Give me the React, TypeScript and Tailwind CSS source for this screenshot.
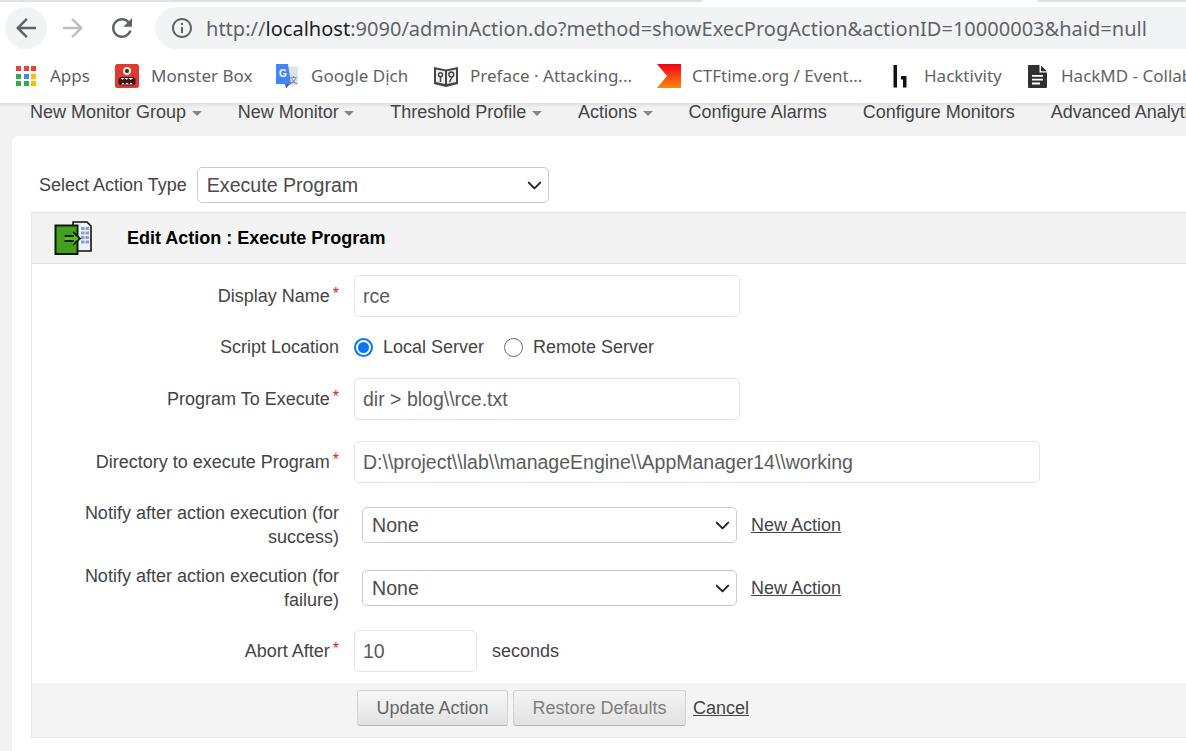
import { ChevronDown } from 'lucide-react';

const navItems = [
  { label: 'New Monitor Group', menu: true },
  { label: 'New Monitor', menu: true },
  { label: 'Threshold Profile', menu: true },
  { label: 'Actions', menu: true },
  { label: 'Configure Alarms', menu: false },
  { label: 'Configure Monitors', menu: false },
  { label: 'Advanced Analytics', menu: false },
];

function ToolbarIcon({ d, color, size }: { d: string; color: string; size: string }) {
  return (
    <svg viewBox="0 0 24 24" className={`shrink-0 ${size}`}>
      <path d={d} fill={color} />
    </svg>
  );
}

function AppsIcon() {
  const colors = ['#ea4335', '#ea4335', '#ea4335', '#34a853', '#4285f4', '#fbbc05', '#34a853', '#34a853', '#fbbc05'];
  return (
    <div className="grid grid-cols-3 gap-[2.5px] w-[20px] h-[20px] shrink-0">
      {colors.map((c, i) => (
        <svg key={i} viewBox="0 0 4 4" className="w-[5px] h-[5px]">
          <rect width="4" height="4" fill={c} />
        </svg>
      ))}
    </div>
  );
}

function MonsterIcon() {
  return (
    <svg viewBox="0 0 24 24" className="w-6 h-6 shrink-0">
      <rect width="24" height="24" rx="2.5" fill="#e0392f" />
      <circle cx="12" cy="7" r="4.2" fill="#e9e4e2" />
      <circle cx="12" cy="7" r="2" fill="#55201c" />
      <rect x="3.5" y="13" width="17" height="8.5" rx="3.5" fill="#3a1212" />
      <path d="M5.5 14 L7.5 16 L9.5 14 L11.5 16 L13.5 14 L15.5 16 L18.5 14 Z" fill="#f5ecea" />
      <path d="M6 20.5 L8 18.5 L10 20.5 L12 18.5 L14 20.5 L16 18.5 L18 20.5 Z" fill="#f5ecea" />
    </svg>
  );
}

function TranslateIcon() {
  return (
    <svg viewBox="0 0 24 26" className="w-6 h-[26px] shrink-0">
      <path d="M9 4 H23 V22 H9 Z" fill="#dfe3e8" />
      <path d="M1 1 H13 L16 21 H1 Z" fill="#4285f4" />
      <path d="M10 21 L15 21 L11 25.5 Z" fill="#3367c9" />
      <text x="4" y="13.5" fontSize="10" fontWeight="700" fill="#fff" fontFamily="Liberation Sans, sans-serif">G</text>
      <text x="14.5" y="20" fontSize="8" fill="#666" fontFamily="Noto Sans CJK SC, sans-serif">文</text>
    </svg>
  );
}

function BookIcon() {
  return (
    <svg viewBox="0 0 24 21" className="w-6 h-[21px] shrink-0">
      <path d="M0 1 L12 3.5 L24 1 V18 L12 21 L0 18 Z" fill="#444" />
      <path d="M2 3.5 L11 5.2 V18 L2 16 Z M13 5.2 L22 3.5 V16 L13 18 Z" fill="#efefef" />
      <circle cx="6.5" cy="8.7" r="2" fill="none" stroke="#444" strokeWidth="1.5" />
      <path d="M6.5 10.5 V16" stroke="#444" strokeWidth="1.5" />
      <circle cx="17.3" cy="8.5" r="2.4" fill="none" stroke="#444" strokeWidth="1.5" />
      <path d="M18 11 L15.5 16.3" stroke="#444" strokeWidth="1.5" />
    </svg>
  );
}

function CtfIcon() {
  return (
    <svg viewBox="0 0 24 24" className="w-6 h-6 shrink-0">
      <defs>
        <linearGradient id="ctf" x1="0" y1="0" x2="0" y2="1">
          <stop offset="0" stopColor="#f0001c" />
          <stop offset="1" stopColor="#ff8a00" />
        </linearGradient>
      </defs>
      <path d="M0 0 H24 V24 H0 L10 12 Z" fill="url(#ctf)" />
    </svg>
  );
}

function H1Icon() {
  return (
    <svg viewBox="0 0 14 23" className="w-[14px] h-[23px] shrink-0">
      <path d="M0.5 0 H4 V22.5 H0.5 Z M8 11 H13.5 V22.5 H10 V14.5 H8 Z" fill="#111" />
    </svg>
  );
}

function DocIcon() {
  return (
    <svg viewBox="0 0 19 23" className="w-[19px] h-[23px] shrink-0">
      <path d="M1 0 H11.5 V7.5 H19 V22 Q19 23 18 23 H1 Q0 23 0 22 V1 Q0 0 1 0 Z" fill="#303030" />
      <path d="M13 0.5 L19 6.2 H13 Z" fill="#303030" />
      <path d="M4 10 H15 V11.8 H4 Z M4 13.8 H15 V15.6 H4 Z M4 17.6 H12 V19.4 H4 Z" fill="#fff" />
    </svg>
  );
}

function ActionIcon() {
  return (
    <svg viewBox="0 0 38 34" className="w-[38px] h-[34px] shrink-0">
      <path d="M19 1 H33 L37 5 V30 H19 Z" fill="#eef1f8" stroke="#111" strokeWidth="1.6" />
      <g fill="#8f9ccc">
        <rect x="27" y="6" width="3.5" height="3" /><rect x="31.5" y="6" width="3.5" height="3" />
        <rect x="27" y="10.5" width="3.5" height="3" /><rect x="31.5" y="10.5" width="3.5" height="3" />
        <rect x="27" y="15" width="3.5" height="3" /><rect x="31.5" y="15" width="3.5" height="3" />
        <rect x="27" y="19.5" width="3.5" height="3" /><rect x="31.5" y="19.5" width="3.5" height="3" />
      </g>
      <path d="M1.5 4.5 H23.5 V33 H1.5 Z" fill="#44a01c" stroke="#071c03" strokeWidth="2" />
      <path d="M10.5 14 H18 V10.5 L26 17.5 L18 24.5 V21 H10.5 Z" fill="#5fb526" />
      <path d="M10.5 15 H20 M10.5 20 H20 M19 11 L26 17.5 L19 24" fill="none" stroke="#0c2606" strokeWidth="1.8" />
    </svg>
  );
}

function Bookmark({ icon, label, width, iconCol }: { icon: React.ReactNode; label: string; width: string; iconCol: string }) {
  return (
    <div className={`flex items-center shrink-0 ${width}`}>
      <div className={`flex items-center shrink-0 ${iconCol}`}>{icon}</div>
      <span className="whitespace-nowrap">{label}</span>
    </div>
  );
}

function Row({ label, required, className, children }: { label: string; required?: boolean; className: string; children: React.ReactNode }) {
  return (
    <div className={`flex items-center ${className}`}>
      <div className="w-[307px] shrink-0 text-right leading-6 pl-[40px]">
        {label}
        <span className={required ? 'text-[#e0202a] ml-[3px] align-text-top text-[16px] leading-4' : 'hidden'}>*</span>
      </div>
      <div className="flex items-center ml-[15px]">{children}</div>
    </div>
  );
}

function TextBox({ value, width }: { value: string; width: string }) {
  return (
    <div className={`h-[42px] border border-[#e3e3e3] rounded-[5px] bg-white flex items-center px-[8px] pt-[1px] text-[#5c5c5c] text-[19.5px] ${width}`}>
      {value}
    </div>
  );
}

function SelectBox({ value, width }: { value: string; width: string }) {
  return (
    <div className={`h-9 border border-[#cccccc] rounded-[5px] bg-white flex items-center justify-between pl-[9px] pr-[2px] pt-[1px] text-[#4a4a4a] text-[19.6px] ${width}`}>
      {value}
      <ChevronDown size={23} strokeWidth={2} color="#222" />
    </div>
  );
}

function NewAction() {
  return <span className="ml-[14px] pt-[1px] underline text-[#444]">New Action</span>;
}

export default function App() {
  return (
    <div className="w-[1186px] h-[751px] overflow-hidden bg-[#f2f2f2] text-[18px] text-[#444] font-['Liberation_Sans',sans-serif]">
      <div className="bg-white h-[103px] font-['Noto_Sans',sans-serif] text-[#5f6368]">
        <div className="flex h-[2px] bg-[#dee1e6]">
          <div className="ml-[702px] w-[335px] bg-white" />
        </div>
        <div className="flex items-start pt-[5px] h-[50px]">
          <div className="w-[42px] h-[42px] ml-[5px] rounded-full bg-[#f1f3f4] flex items-center justify-center shrink-0">
            <ToolbarIcon color="#5f6368" size="w-[30px] h-[30px]" d="M20 11H7.83l5.59-5.59L12 4l-8 8 8 8 1.41-1.41L7.83 13H20v-2z" />
          </div>
          <div className="h-[42px] flex items-center ml-[11px]">
            <ToolbarIcon color="#bdc1c6" size="w-[30px] h-[30px]" d="M12 4l-1.41 1.41L16.17 11H4v2h12.17l-5.58 5.59L12 20l8-8z" />
          </div>
          <div className="h-[42px] flex items-center ml-[19px]">
            <ToolbarIcon color="#5f6368" size="w-[30px] h-[30px]" d="M17.65 6.35C16.2 4.9 14.21 4 12 4c-4.42 0-7.99 3.58-7.99 8s3.57 8 7.99 8c3.73 0 6.84-2.55 7.73-6h-2.08c-.82 2.33-3.04 4-5.65 4-3.31 0-6-2.69-6-6s2.69-6 6-6c1.66 0 3.14.69 4.22 1.78L13 11h7V4l-2.35 2.35z" />
          </div>
          <div className="ml-[18px] flex-1 h-[42px] rounded-l-full bg-[#f1f3f4] flex items-center pl-[15px] text-[20px] tracking-[0.02px] whitespace-nowrap">
            <ToolbarIcon color="#5f6368" size="w-6 h-6" d="M11 7h2v2h-2zm0 4h2v6h-2zm1-9C6.48 2 2 6.48 2 12s4.48 10 10 10 10-4.48 10-10S17.52 2 12 2zm0 18c-4.41 0-8-3.59-8-8s3.59-8 8-8 8 3.59 8 8-3.59 8-8 8z" />
            <span className="ml-[12px] pt-[2px]">
              http://<span className="text-[#202124]">localhost</span>:9090/adminAction.do?method=showExecProgAction&amp;actionID=10000003&amp;haid=null
            </span>
          </div>
        </div>
        <div className="flex items-center h-[48px] pl-[16px] text-[17px] overflow-hidden">
          <Bookmark icon={<AppsIcon />} label="Apps" width="w-[99px]" iconCol="w-[34px]" />
          <Bookmark icon={<MonsterIcon />} label="Monster Box" width="w-[160px]" iconCol="w-[36px]" />
          <Bookmark icon={<TranslateIcon />} label="Google Dịch" width="w-[159px]" iconCol="w-[36px]" />
          <Bookmark icon={<BookIcon />} label="Preface · Attacking..." width="w-[223px]" iconCol="w-[36px]" />
          <Bookmark icon={<CtfIcon />} label="CTFtime.org / Event..." width="w-[236px]" iconCol="w-[35px]" />
          <Bookmark icon={<H1Icon />} label="Hacktivity" width="w-[135px]" iconCol="w-[31px]" />
          <Bookmark icon={<DocIcon />} label="HackMD - Collaborative" width="w-[200px]" iconCol="w-[33px]" />
        </div>
      </div>

      <nav className="flex items-center h-[33px] pb-[14px] pl-[30px] text-[#444] whitespace-nowrap bg-linear-to-b from-[#dedede] to-[#f2f2f2] to-[15%]">
        {navItems.map((item) => (
          <div key={item.label} className="flex items-center mr-[36px] shrink-0">
            {item.label}
            <span className={item.menu ? 'ml-[5.6px] mt-[2px] border-x-[5px] border-x-transparent border-t-[5px] border-t-[#888]' : 'hidden'} />
          </div>
        ))}
      </nav>

      <main className="ml-[12px] h-[615px] bg-white rounded-tl-[6px] pt-[31px] pl-[19px]">
        <div className="flex items-center h-9 pl-[8px]">
          <span>Select Action Type</span>
          <div className="ml-[10px]">
            <SelectBox value="Execute Program" width="w-[352px]" />
          </div>
        </div>

        <section className="mt-[9px] h-[526px] border border-[#e6e6e6] border-r-0 flex flex-col">
          <div className="h-[51px] bg-[#f3f3f3] border-b border-[#e2e2e2] flex items-center pl-[22px] shrink-0">
            <ActionIcon />
            <span className="ml-[35px] font-bold text-black">Edit Action : Execute Program</span>
          </div>

          <div className="flex-1 pt-[11px]">
            <Row label="Display Name" required className="h-[42px]">
              <TextBox value="rce" width="w-[386px]" />
            </Row>
            <Row label="Script Location" className="h-6 mt-[18px]">
              <div className="w-[19px] h-[19px] rounded-full border-[2px] border-[#0a74f5] flex items-center justify-center">
                <div className="w-[11px] h-[11px] rounded-full bg-[#0a74f5]" />
              </div>
              <span className="ml-[10px]">Local Server</span>
              <div className="ml-[20px] w-[19px] h-[19px] rounded-full border border-[#6b6b6b]" />
              <span className="ml-[10px]">Remote Server</span>
            </Row>
            <Row label="Program To Execute" required className="h-[42px] mt-[19px]">
              <TextBox value="dir > blog\\rce.txt" width="w-[386px]" />
            </Row>
            <Row label="Directory to execute Program" required className="h-[42px] mt-[21px]">
              <TextBox value="D:\\project\\lab\\manageEngine\\AppManager14\\working" width="w-[686px]" />
            </Row>
            <Row label="Notify after action execution (for success)" className="h-12 mt-[18px]">
              <div className="ml-[8px]">
                <SelectBox value="None" width="w-[375px]" />
              </div>
              <NewAction />
            </Row>
            <Row label="Notify after action execution (for failure)" className="h-12 mt-[15px]">
              <div className="ml-[8px]">
                <SelectBox value="None" width="w-[375px]" />
              </div>
              <NewAction />
            </Row>
            <Row label="Abort After" required className="h-[42px] mt-[18px]">
              <TextBox value="10" width="w-[123px]" />
              <span className="ml-[15px] pt-[1px]">seconds</span>
            </Row>
          </div>

          <div className="h-[54px] bg-[#f4f4f4] flex items-start pt-[7px] pl-[325px] shrink-0">
            <button className="w-[151px] h-9 rounded-[3px] border border-[#d4d4d4] border-b-[#b5b5b5] bg-linear-to-b from-[#f8f8f8] to-[#e2e2e2] text-[#666]">
              Update Action
            </button>
            <button className="ml-[5px] w-[173px] h-9 rounded-[3px] border border-[#d4d4d4] border-b-[#b5b5b5] bg-linear-to-b from-[#f4f4f4] to-[#e2e2e2] text-[#808080]">
              Restore Defaults
            </button>
            <span className="ml-[7px] h-9 leading-9 underline text-[#444]">Cancel</span>
          </div>
        </section>
      </main>
    </div>
  );
}
